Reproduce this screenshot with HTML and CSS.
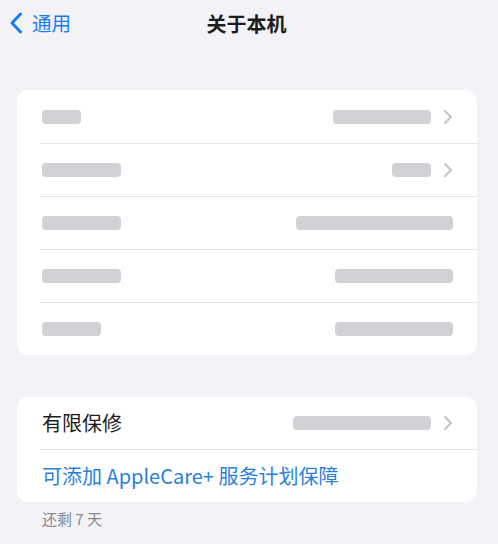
FILE: index.html
```html
<!DOCTYPE html>
<html lang="zh-CN">
<head>
<meta charset="utf-8">
<title>关于本机</title>
<link rel="stylesheet" href="styles.css">
</head>
<body>
<div class="page">
  <header class="nav">
    <div class="back">
      <svg class="back-icon" width="14" height="22" viewBox="0 0 14 22"><path d="M11.5 2 L3 11 L11.5 20" fill="none" stroke="#1b7cf2" stroke-width="3" stroke-linecap="round" stroke-linejoin="round"/></svg>
      <span class="back-text">通用</span>
    </div>
    <div class="title">关于本机</div>
    <div class="nav-spacer"></div>
  </header>

  <section class="card card-info">
    <div class="row first"><div class="row-inner">
      <span class="bar" style="width:39px"></span>
      <span class="right"><span class="bar" style="width:98px"></span><svg class="chev" width="10" height="16" viewBox="0 0 10 16"><path d="M2 2 L8 8 L2 14" fill="none" stroke="#c4c4c8" stroke-width="2" stroke-linecap="round" stroke-linejoin="round"/></svg></span>
    </div></div>
    <div class="row"><div class="row-inner">
      <span class="bar" style="width:79px"></span>
      <span class="right"><span class="bar" style="width:39px"></span><svg class="chev" width="10" height="16" viewBox="0 0 10 16"><path d="M2 2 L8 8 L2 14" fill="none" stroke="#c4c4c8" stroke-width="2" stroke-linecap="round" stroke-linejoin="round"/></svg></span>
    </div></div>
    <div class="row"><div class="row-inner">
      <span class="bar" style="width:79px"></span>
      <span class="right"><span class="bar" style="width:157px"></span></span>
    </div></div>
    <div class="row"><div class="row-inner">
      <span class="bar" style="width:79px"></span>
      <span class="right"><span class="bar" style="width:118px"></span></span>
    </div></div>
    <div class="row"><div class="row-inner">
      <span class="bar" style="width:59px"></span>
      <span class="right"><span class="bar" style="width:118px"></span></span>
    </div></div>
  </section>

  <section class="card card-warranty">
    <div class="row first"><div class="row-inner wrow">
      <span class="label">有限保修</span>
      <span class="right"><span class="bar" style="width:138px"></span><svg class="chev" width="10" height="16" viewBox="0 0 10 16"><path d="M2 2 L8 8 L2 14" fill="none" stroke="#c4c4c8" stroke-width="2" stroke-linecap="round" stroke-linejoin="round"/></svg></span>
    </div></div>
    <div class="row"><div class="row-inner link-row">
      <span class="link">可添加 AppleCare+ 服务计划保障</span>
    </div></div>
  </section>
  <div class="footnote">还剩 7 天</div>
</div>
</body>
</html>
```

FILE: styles.css
```css
html, body {
  margin: 0;
  padding: 0;
  background: #f2f2f7;
}
body {
  font-family: "Noto Sans CJK SC", "Noto Sans", sans-serif;
  color: #1c1c1e;
  width: 498px;
  height: 544px;
  overflow: hidden;
}
.page {
  display: flex;
  flex-direction: column;
}
.nav {
  height: 45px;
  display: grid;
  grid-template-columns: 1fr auto 1fr;
  align-items: center;
  padding: 0 14px 0 9px;
}
.back {
  display: flex;
  align-items: center;
  gap: 9px;
  color: #1b7cf2;
}
.back-icon {
  display: block;
}
.back-text {
  font-size: 19.5px;
  line-height: 22px;
}
.title {
  font-size: 20px;
  font-weight: 600;
  line-height: 24px;
  padding-top: 2px;
}
.card {
  background: #ffffff;
  border-radius: 11px;
  margin: 0 21px 0 17px;
  overflow: hidden;
}
.card-info {
  margin-top: 45px;
}
.card-warranty {
  margin-top: 42px;
}
.row {
  padding-left: 23px;
}
.row-inner {
  height: 53px;
  box-sizing: border-box;
  border-top: 1px solid #e4e4e9;
  display: flex;
  align-items: center;
  justify-content: space-between;
  padding: 0 24px 0 2px;
}
.row.first .row-inner {
  border-top: none;
  height: 53px;
}
.card-warranty .row.first .row-inner {
  height: 52px;
}
.right {
  display: flex;
  align-items: center;
  gap: 12px;
}
.bar {
  display: block;
  height: 14px;
  border-radius: 4px;
  background: #d2d1d6;
}
.chev {
  display: block;
}
.label {
  font-size: 20px;
  line-height: 24px;
  color: #1c1c1e;
}
.link {
  font-size: 20px;
  line-height: 24px;
  color: #2a7fd9;
}
.footnote {
  margin: 7px 0 0 42px;
  font-size: 15px;
  line-height: 20px;
  color: #8a8a8e;
}
```
